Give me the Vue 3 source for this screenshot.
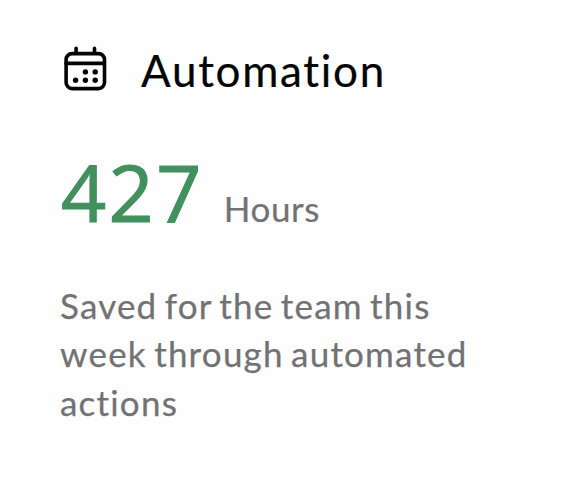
<template>
  <section class="stat-card">
    <header class="stat-header">
      <svg class="stat-icon" viewBox="0 0 44 48" fill="none" aria-hidden="true">
        <rect x="3.1" y="9.6" width="38.4" height="35" rx="6" />
        <path d="M3 19.4h38" />
        <path d="M13.1 4.3v4.5M31.5 4.3v4.5" />
        <circle v-for="dot in dots" :key="dot.id" :cx="dot.x" :cy="dot.y" r="2.7" />
      </svg>
      <h2 class="stat-title">{{ stat.title }}</h2>
    </header>

    <div class="stat-value">
      <span class="stat-number">{{ stat.value }}</span>
      <span class="stat-unit">{{ stat.unit }}</span>
    </div>

    <p class="stat-desc">{{ stat.description }}</p>
  </section>
</template>

<script setup>
const stat = {
  title: 'Automation',
  value: 427,
  unit: 'Hours',
  description: 'Saved for the team this week through automated actions'
}

// days of the calendar icon
const dots = [
  { id: 1, x: 22.4, y: 27.9 },
  { id: 2, x: 32.2, y: 27.9 },
  { id: 3, x: 12.6, y: 36.3 },
  { id: 4, x: 22.4, y: 36.3 },
  { id: 5, x: 32.2, y: 36.3 }
]
</script>

<style>
body {
  background: #fefefe;
}
</style>

<style scoped>
.stat-card {
  box-sizing: border-box;
  width: 576px;
  min-height: 484px;
  padding: 46px 60px 0;
  font-family: Lato, 'Open Sans', sans-serif;
  color: #727274;
}

.stat-header {
  display: flex;
  align-items: flex-start;
  gap: 34px;
  height: 48px;
  padding-left: 3px;
}

.stat-icon {
  width: 44px;
  height: 48px;
  margin-top: -2px;
  flex-shrink: 0;
}

.stat-icon rect,
.stat-icon path {
  stroke: #050505;
  stroke-width: 3.6;
  stroke-linecap: round;
}

.stat-icon circle {
  fill: #050505;
}

.stat-title {
  margin: 0;
  color: #050505;
  font-size: 44px;
  font-weight: 400;
  line-height: 48px;
  letter-spacing: 1.7px;
  -webkit-text-stroke: 0.2px currentColor;
}

.stat-value {
  display: flex;
  align-items: baseline;
  gap: 20px;
  margin-top: 58px;
  padding-left: 1px;
  line-height: 80px;
}

.stat-number {
  color: #41905d;
  font-family: 'Open Sans', sans-serif;
  font-size: 79px;
  letter-spacing: 2.4px;
  -webkit-text-stroke: 1.1px currentColor;
}

.stat-unit {
  font-size: 35px;
  letter-spacing: 0.6px;
  -webkit-text-stroke: 0.2px currentColor;
}

.stat-desc {
  width: 430px;
  margin: 33px 0 0;
  font-size: 35px;
  line-height: 48.3px;
  letter-spacing: 1.2px;
  word-spacing: -2.8px;
  -webkit-text-stroke: 0.25px currentColor;
}
</style>
